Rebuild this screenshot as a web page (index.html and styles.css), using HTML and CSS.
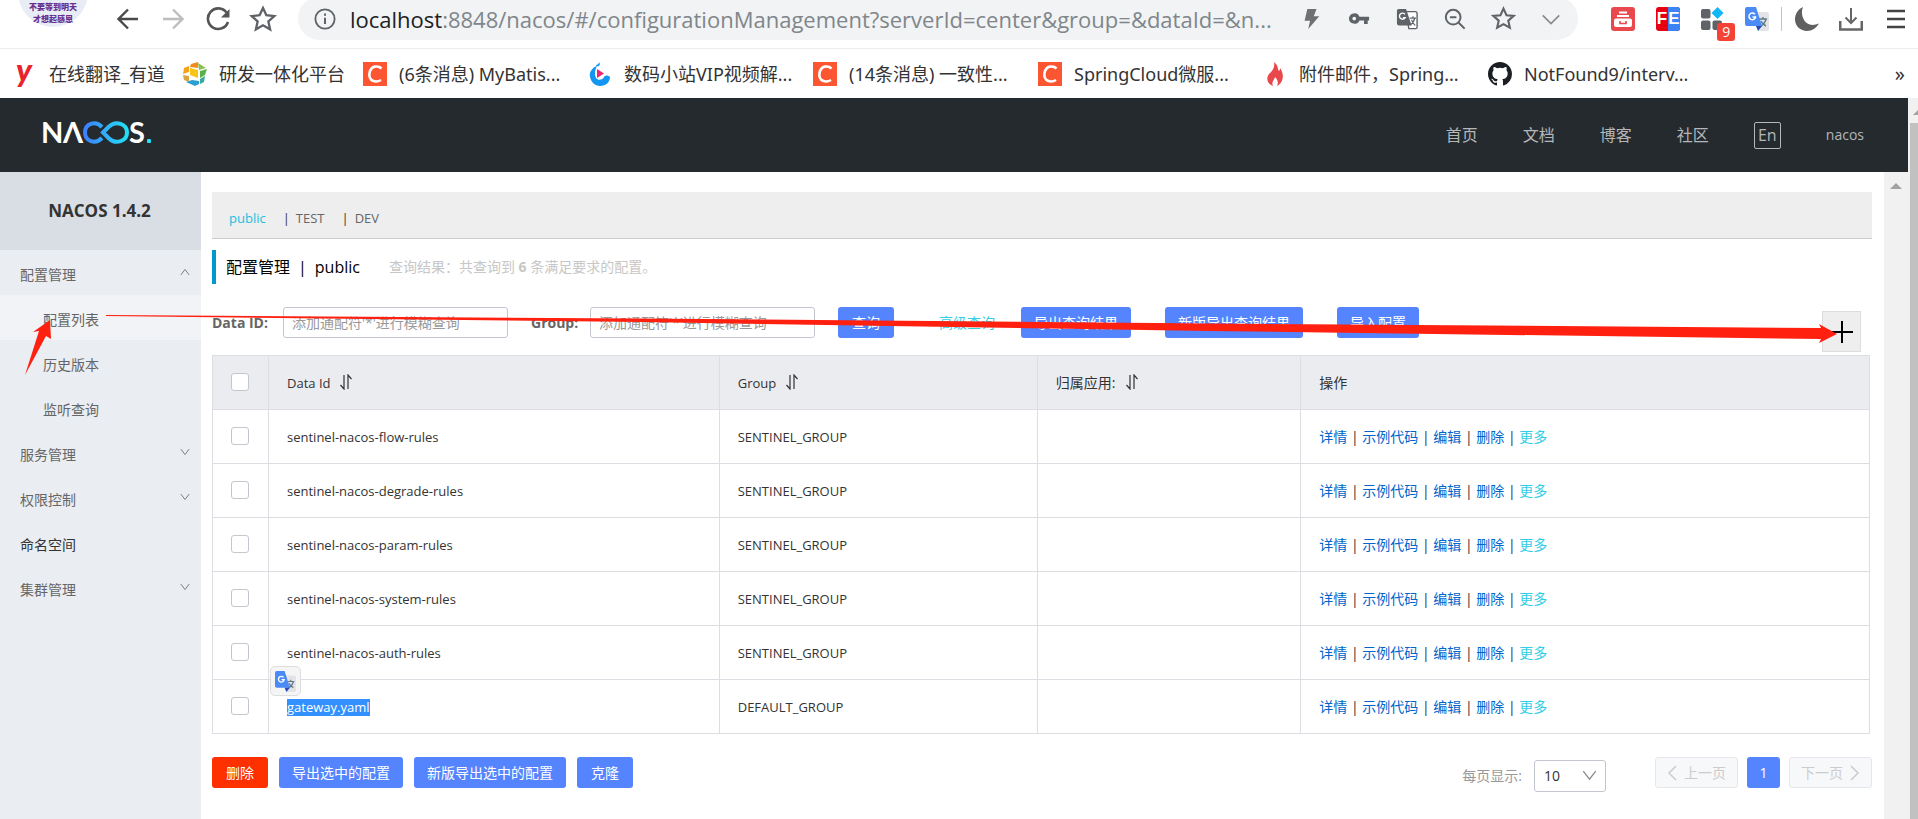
FILE: index.html
```html
<!DOCTYPE html>
<html lang="zh-CN">
<head>
<meta charset="utf-8">
<title>Nacos</title>
<link rel="stylesheet" href="styles.css">
</head>
<body>
<svg class="sprite" aria-hidden="true">
  <symbol id="i-star" viewBox="0 0 24 24"><path d="M12 2.5l2.9 6.3 6.8.7-5.1 4.6 1.5 6.8L12 17.4l-6.1 3.5 1.5-6.8-5.1-4.6 6.8-.7z" fill="none" stroke="currentColor" stroke-width="2"/></symbol>
  <symbol id="i-down" viewBox="0 0 12 12"><path d="M1 2.5L6 9l5-6.500" fill="none" stroke="currentColor" stroke-width="1"/></symbol>
  <symbol id="i-sort" viewBox="0 0 14 16"><path d="M5 1v14L1.500 11M9 15V1l3.500 4" fill="none" stroke="currentColor" stroke-width="1.200"/></symbol>
  <symbol id="i-csdn" viewBox="0 0 24 24"><path fill="#fc5531" d="M0 0h24v24H0z"/><path d="M18.500 6.500C15.500 3.500 8 3 6.500 11c-1.200 8.500 6.500 10 11.500 7" fill="none" stroke="#fff" stroke-width="2.600"/></symbol>
  <symbol id="i-gt" viewBox="0 0 24 24"><path fill="#e3e4e7" d="M9 5h13a2 2 0 012 2v15a2 2 0 01-2 2H13z"/><path d="M14 12h8M18 10v2M21 12c-1 4-3 6-6 7.500M16 14c1 3 3 4 5 5" stroke="#607988" stroke-width="1.400" fill="none"/><path fill="#4b8bf5" d="M2 0h9l6 19H2a2 2 0 01-2-2V2a2 2 0 012-2z"/><path fill="#2a48b8" d="M11 19h6l-4 5z"/><path d="M9.800 7.300A3.300 3.300 0 1010.500 10H7.500" fill="none" stroke="#fff" stroke-width="1.500"/></symbol>
</svg>

<header class="browser">
  <div class="toolbar">
    <div class="avatar"><span>不要等到明天</span><span>才想起感恩</span></div>
    <div class="nav-buttons">
      <button aria-label="后退"><svg viewBox="0 0 24 24"><path d="M22 12H3M12 2.500L2.500 12l9.500 9.500" fill="none" stroke="#4a4a4a" stroke-width="2.400"/></svg></button>
      <button aria-label="前进"><svg viewBox="0 0 24 24"><path d="M2 12h19M12 2.500l9.500 9.500-9.500 9.500" fill="none" stroke="#bdbdbd" stroke-width="2.400"/></svg></button>
      <button aria-label="刷新"><svg viewBox="0 0 24 24"><path d="M20.500 5.500A10.300 10.300 0 1022 15" fill="none" stroke="#555" stroke-width="2.600"/><path d="M23.500 2v8.500H15z" fill="#555"/></svg></button>
      <button aria-label="收藏"><svg class="big"><use href="#i-star"/></svg></button>
    </div>
    <div class="address">
      <svg class="info" viewBox="0 0 24 24"><circle cx="12" cy="12" r="10.500" fill="none" stroke="#5f6368" stroke-width="2"/><path d="M12 10.500v7M12 6v2.500" stroke="#5f6368" stroke-width="2.200"/></svg>
      <div class="url"><b>localhost</b>:8848/nacos/#/configurationManagement?serverId=center&amp;group=&amp;dataId=&amp;n...</div>
      <div class="address-icons">
        <button aria-label="加速"><svg viewBox="0 0 24 24"><path d="M8 1h10l-3 8h6L9 23l2-9H5z" fill="#707070"/></svg></button>
        <button aria-label="密码"><svg viewBox="0 0 24 24"><path d="M1 11.500a6 6 0 0111.500-2H23v4h-1.500v4h-4v-4h-5A6 6 0 011 11.500z" fill="#5f6368"/><circle cx="6.800" cy="11.500" r="2" fill="#f1f3f4"/></svg></button>
        <button aria-label="翻译"><svg viewBox="0 0 24 24"><path d="M11 4h10a2 2 0 012 2v15a1.500 1.500 0 01-1.500 1.500H14z" fill="#fff" stroke="#5f6368" stroke-width="1.500"/><path d="M3 1h8l6 18H3a2 2 0 01-2-2V3a2 2 0 012-2z" fill="#5f6368"/><path d="M9.800 7A3.300 3.300 0 1010 10.500H7.500" fill="none" stroke="#fff" stroke-width="1.500"/><path d="M15 11h7M18.500 9v2M20.500 11c-1 4-2.500 6-5 7.500M17 13c1 3 2 4.500 4 6" stroke="#5f6368" stroke-width="1.400" fill="none"/></svg></button>
        <button aria-label="缩小"><svg viewBox="0 0 24 24"><circle cx="10" cy="10" r="8" fill="none" stroke="#5f6368" stroke-width="2.200"/><path d="M6.500 10h7M16 16l6.500 6.500" stroke="#5f6368" stroke-width="2.200"/></svg></button>
        <button aria-label="书签"><svg class="fav"><use href="#i-star"/></svg></button>
        <button aria-label="展开"><svg viewBox="0 0 24 24"><path d="M3 8l9 9 9-9" fill="none" stroke="#8a8a8a" stroke-width="1.800"/></svg></button>
      </div>
    </div>
    <div class="extensions">
      <button aria-label="收纳"><svg viewBox="0 0 24 24"><rect width="24" height="24" rx="3" fill="#e9484d"/><path d="M8 5.500h8M6 9h12" stroke="#fff" stroke-width="1.800"/><path d="M5 11.500h14a2 2 0 012 2V18a2 2 0 01-2 2H5a2 2 0 01-2-2v-4.500a2 2 0 012-2z" fill="#fff"/><path d="M9 14v2.500h6V14" fill="none" stroke="#e9484d" stroke-width="1.600"/></svg></button>
      <button aria-label="FE"><span class="fe"><i>F</i><i>E</i></span></button>
      <button aria-label="扩展"><svg viewBox="0 0 24 24"><rect x="1" y="2" width="9.500" height="9.500" rx="2" fill="#5f6368"/><rect x="1" y="13.500" width="9.500" height="9.500" rx="2" fill="#5f6368"/><rect x="12.500" y="13.500" width="9.500" height="9.500" rx="2" fill="#5f6368"/><path d="M17.500 0l6 6-6 6-6-6z" fill="#12b7f5"/></svg><span class="count">9</span></button>
      <button aria-label="谷歌翻译"><svg><use href="#i-gt"/></svg></button>
      <span class="divider"></span>
      <button aria-label="夜间"><svg viewBox="0 0 24 24"><path d="M8 0C3 2 0 7 0 12.500 0 19 5.500 24 12 24c5 0 9.500-3 12-7.500-7 3-13 1-15.500-4.500C6.500 8 6.500 3.500 8 0z" fill="#606060"/></svg></button>
      <button aria-label="下载"><svg viewBox="0 0 24 24"><path d="M12 1v15M6.500 10.500L12 16l5.500-5.500" fill="none" stroke="#666" stroke-width="2"/><path d="M1.200 14v8.500h21.600V14" fill="none" stroke="#666" stroke-width="2.600"/></svg></button>
      <button aria-label="菜单"><svg viewBox="0 0 24 24"><path d="M3 4h18M3 12h18M3 20h18" stroke="#444" stroke-width="2.600"/></svg></button>
    </div>
  </div>
  <nav class="bookmarks">
    <a href="#"><span class="youdao">y</span>在线翻译_有道</a>
    <a href="#"><svg viewBox="0 0 24 24"><path d="M1 6l13-6 10 7-3 14-9 3L0 18z" fill="#fff"/><path d="M8 2l7-2v6l-8-1z" fill="#f28a1c"/><path d="M15 1l8 5-7 2z" fill="#8cc152"/><path d="M1 6l5-2v6L0 12z" fill="#f9a01b"/><path d="M7 6l8 2v8l-8-3z" fill="#fbc516"/><path d="M0 13l6 1v6l-5-2z" fill="#d9a441"/><path d="M17 9l7-2-2 6-5 3z" fill="#5bb04a"/><path d="M17 17l5-3-1 6-4 2z" fill="#36a9a0"/><path d="M3 20l6-2 7 1v3l-4 2z" fill="#2c9fd1"/></svg>研发一体化平台</a>
    <a href="#" class="wide"><svg><use href="#i-csdn"/></svg>(6条消息) MyBatis...</a>
    <a href="#" class="wide"><svg viewBox="0 0 24 24"><path d="M9 4C4 6 1 10 2 15c1 5 5 9 10 9 6 0 10-4 10-9-2-2-5-2-6 0-1 3-6 4-8 1-2-4-1-8 1-12z" fill="#1296f0"/><path d="M8 4c0-2 3-1 3-4 2 3 0 5-3 4z" fill="#1296f0"/><path d="M9 7l7 4.500L9 16z" fill="#f0266f"/></svg>数码小站VIP视频解...</a>
    <a href="#" class="wide"><svg><use href="#i-csdn"/></svg>(14条消息) 一致性...</a>
    <a href="#" class="wide"><svg><use href="#i-csdn"/></svg>SpringCloud微服...</a>
    <a href="#" class="wide"><svg viewBox="0 0 24 24"><path d="M11 0c5 4 3 7 5 9 1-1 1-2 1-3 5 7 3 15-3 18 2-4 0-7-2-9-1 4-4 5-2 9-7-3-7-9-3-13 3-3 5-6 4-11z" fill="#e8484a"/></svg>附件邮件，Spring...</a>
    <a href="#" class="wide"><svg viewBox="0 0 16 16"><path fill="#1b1f23" d="M8 0C3.580 0 0 3.580 0 8c0 3.540 2.290 6.530 5.470 7.590.4.070.55-.17.55-.38 0-.19-.01-.82-.01-1.490-2.010.37-2.530-.49-2.690-.94-.09-.23-.48-.94-.82-1.130-.28-.15-.68-.52-.01-.53.63-.01 1.080.58 1.230.82.72 1.210 1.870.87 2.330.66.07-.52.28-.87.51-1.070-1.780-.2-3.640-.89-3.640-3.950 0-.87.31-1.590.82-2.150-.08-.2-.36-1.020.08-2.120 0 0 .67-.21 2.200.82a7.600 7.600 0 014 0c1.530-1.040 2.200-.82 2.200-.82.44 1.100.16 1.920.08 2.120.51.56.82 1.270.82 2.150 0 3.070-1.870 3.750-3.650 3.950.29.25.54.73.54 1.480 0 1.070-.01 1.930-.01 2.200 0 .21.15.46.55.38A8.010 8.010 0 0016 8c0-4.420-3.580-8-8-8z"/></svg>NotFound9/interv...</a>
    <button class="more" aria-label="更多书签">»</button>
  </nav>
</header>

<div class="page">
  <div class="app">
    <header class="topbar">
      <a href="#" class="logo" aria-label="NACOS">
        <svg viewBox="-6 0 120 44" width="120" height="44">
          <defs>
            <linearGradient id="lg" gradientUnits="userSpaceOnUse" x1="40" y1="0" x2="86" y2="0"><stop offset="0" stop-color="#3d7dff"/><stop offset="1" stop-color="#22e3f4"/></linearGradient>
          </defs>
          <text x="-2" y="30">N</text><text x="20" y="30">Λ</text><text x="86" y="30">S</text>
          <path d="M59 14C52 7 42 11 42 19.500S52 32 59 25" fill="none" stroke="url(#lg)" stroke-width="4"/>
          <path d="M60 19.500L66 13.500C73 7 84 11 84 19.500S73 32 66 25.500z" fill="none" stroke="url(#lg)" stroke-width="4"/>
          <rect x="104" y="26" width="4" height="4" rx="1" fill="#22e3f4"/>
        </svg>
      </a>
      <nav class="links">
        <a href="#">首页</a><a href="#">文档</a><a href="#">博客</a><a href="#">社区</a>
        <button class="lang">En</button><a href="#" class="user">nacos</a>
      </nav>
    </header>
    <div class="body">
      <aside class="sidebar">
        <h1>NACOS 1.4.2</h1>
        <nav class="menu">
          <a href="#">配置管理<svg class="up"><use href="#i-down"/></svg></a>
          <a href="#" class="sub current">配置列表</a>
          <a href="#" class="sub">历史版本</a>
          <a href="#" class="sub">监听查询</a>
          <a href="#">服务管理<svg><use href="#i-down"/></svg></a>
          <a href="#">权限控制<svg><use href="#i-down"/></svg></a>
          <a href="#" class="dark">命名空间</a>
          <a href="#">集群管理<svg><use href="#i-down"/></svg></a>
        </nav>
      </aside>
      <main class="content">
        <nav class="spaces"><a href="#" class="on">public</a><span>|</span><a href="#">TEST</a><span>|</span><a href="#">DEV</a></nav>
        <div class="title"><h2>配置管理<span>|</span>public</h2><p>查询结果：共查询到 <b>6</b> 条满足要求的配置。</p></div>
        <form class="search">
          <label for="did" class="l1">Data ID:</label><input id="did" type="text" placeholder="添加通配符'*'进行模糊查询">
          <label for="grp" class="l2">Group:</label><input id="grp" type="text" placeholder="添加通配符'*'进行模糊查询">
          <button type="button" class="btn">查询</button>
          <a href="#" class="adv">高级查询</a>
          <button type="button" class="btn">导出查询结果</button>
          <button type="button" class="btn wide-gap">新版导出查询结果</button>
          <button type="button" class="btn wide-gap">导入配置</button>
          <button type="button" class="add" aria-label="新建"><svg viewBox="0 0 24 24"><path d="M1 12h22M12 1v22" stroke="#000" stroke-width="2"/></svg></button>
        </form>
        <table>
          <colgroup><col class="c1"><col class="c2"><col class="c3"><col class="c4"><col></colgroup>
          <thead><tr><th><input type="checkbox" aria-label="全选"></th><th>Data Id<svg><use href="#i-sort"/></svg></th><th>Group<svg><use href="#i-sort"/></svg></th><th>归属应用:<svg><use href="#i-sort"/></svg></th><th>操作</th></tr></thead>
          <tbody>
            <tr><td><input type="checkbox" aria-label="选择"></td><td>sentinel-nacos-flow-rules</td><td>SENTINEL_GROUP</td><td></td><td><div class="ops"><a href="#">详情</a><i>|</i><a href="#">示例代码</a><i>|</i><a href="#">编辑</a><i>|</i><a href="#">删除</a><i>|</i><a href="#" class="m">更多</a></div></td></tr>
            <tr><td><input type="checkbox" aria-label="选择"></td><td>sentinel-nacos-degrade-rules</td><td>SENTINEL_GROUP</td><td></td><td><div class="ops"><a href="#">详情</a><i>|</i><a href="#">示例代码</a><i>|</i><a href="#">编辑</a><i>|</i><a href="#">删除</a><i>|</i><a href="#" class="m">更多</a></div></td></tr>
            <tr><td><input type="checkbox" aria-label="选择"></td><td>sentinel-nacos-param-rules</td><td>SENTINEL_GROUP</td><td></td><td><div class="ops"><a href="#">详情</a><i>|</i><a href="#">示例代码</a><i>|</i><a href="#">编辑</a><i>|</i><a href="#">删除</a><i>|</i><a href="#" class="m">更多</a></div></td></tr>
            <tr><td><input type="checkbox" aria-label="选择"></td><td>sentinel-nacos-system-rules</td><td>SENTINEL_GROUP</td><td></td><td><div class="ops"><a href="#">详情</a><i>|</i><a href="#">示例代码</a><i>|</i><a href="#">编辑</a><i>|</i><a href="#">删除</a><i>|</i><a href="#" class="m">更多</a></div></td></tr>
            <tr><td><input type="checkbox" aria-label="选择"></td><td>sentinel-nacos-auth-rules</td><td>SENTINEL_GROUP</td><td></td><td><div class="ops"><a href="#">详情</a><i>|</i><a href="#">示例代码</a><i>|</i><a href="#">编辑</a><i>|</i><a href="#">删除</a><i>|</i><a href="#" class="m">更多</a></div></td></tr>
            <tr><td><input type="checkbox" aria-label="选择"></td><td class="picked"><mark>gateway.yaml</mark><button class="bubble" aria-label="翻译"><svg><use href="#i-gt"/></svg></button></td><td>DEFAULT_GROUP</td><td></td><td><div class="ops"><a href="#">详情</a><i>|</i><a href="#">示例代码</a><i>|</i><a href="#">编辑</a><i>|</i><a href="#">删除</a><i>|</i><a href="#" class="m">更多</a></div></td></tr>
          </tbody>
        </table>
        <div class="footer">
          <button class="btn danger">删除</button><button class="btn">导出选中的配置</button><button class="btn">新版导出选中的配置</button><button class="btn">克隆</button>
          <div class="pager">
            <label for="size">每页显示:</label>
            <div class="select"><select id="size"><option>10</option></select><svg><use href="#i-down"/></svg></div>
            <button class="page-btn" disabled><svg viewBox="0 0 10 16"><path d="M9 1L2 8l7 7" fill="none" stroke="currentColor" stroke-width="1.500"/></svg>上一页</button>
            <button class="btn num">1</button>
            <button class="page-btn" disabled>下一页<svg viewBox="0 0 10 16"><path d="M1 1l7 7-7 7" fill="none" stroke="currentColor" stroke-width="1.500"/></svg></button>
          </div>
        </div>
      </main>
      <div class="inner-scroll"><svg viewBox="0 0 12 6"><path d="M0 6l6-6 6 6z" fill="#a3a3a3"/></svg></div>
    </div>
  </div>
  <div class="outer-scroll"><svg viewBox="0 0 12 6"><path d="M0 6l6-6 6 6z" fill="#a3a3a3"/></svg><div class="thumb"></div></div>
</div>
<svg class="marks" viewBox="0 0 1918 819" preserveAspectRatio="none" aria-hidden="true">
  <path d="M106 315L640 318.500 1210 323.500 1821 328 1819 324 1837 334 1819 343 1821 339 1210 331 640 322 106 316z" fill="#ff2010"/>
  <path d="M50 320L33 332l6-1L25 375l21-39 5 3z" fill="#ff2010"/>
</svg>
</body>
</html>
```
FILE: styles.css
```css
* { box-sizing: border-box; }
body { margin: 0; min-height: 100vh; display: flex; flex-direction: column; overflow: hidden; background: #fff; color: #333; font: 13px/20px "Open Sans", "Noto Sans CJK SC", sans-serif; }
a { color: inherit; text-decoration: none; }
button { font: inherit; color: inherit; background: none; border: 0; padding: 0; }
svg { flex: none; }
.sprite { position: absolute; width: 0; height: 0; }

/* browser chrome */
.browser { height: 98px; color: #5f6368; }
.toolbar { display: flex; height: 49px; border-bottom: 1px solid #ececec; }
.toolbar button { position: relative; flex: 0 1 45px; height: 38px; display: flex; align-items: center; justify-content: center; }
.toolbar svg { width: 24px; height: 24px; }
.avatar { width: 70px; height: 70px; margin: -43px 0 0 18px; border-radius: 50%; background: #e8edf5; display: flex; flex-direction: column; align-items: center; justify-content: flex-end; padding-bottom: 2px; font-weight: 900; font-size: 8px; line-height: 12px; color: #6a2f8e; white-space: nowrap; }
.nav-buttons { display: flex; width: 193px; margin-left: 17px; }
.nav-buttons button { flex: none; width: 45px; }
.toolbar svg.big { width: 28px; height: 28px; }
.address { flex: 1; display: flex; align-items: center; height: 43px; margin-top: -3px; padding: 0 3px 0 16px; border-radius: 22px; background: #f1f3f4; }
.toolbar svg.info { width: 22px; height: 22px; }
.url { flex: 1; margin-left: 14px; font-size: 22px; line-height: 30px; white-space: nowrap; color: #80868b; }
.url b { font-weight: 400; color: #202124; }
.address-icons { display: flex; width: 288px; }
.address-icons button { flex: 1 1 48px; }
.address-icons svg { width: 22px; height: 22px; }
.address-icons svg.fav { width: 25px; height: 25px; }
.extensions { display: flex; align-items: flex-start; width: 340px; padding-left: 23px; }
.divider { width: 1px; height: 24px; margin: 7px 2px; background: #c4c4c4; }
.fe { display: flex; width: 24px; height: 24px; border-radius: 3px; overflow: hidden; background: #e60012; }
.fe i { flex: 1; font: 700 17px/24px "Liberation Sans", sans-serif; color: #fff; text-align: center; }
.fe i + i { background: #3c83f6; }
.count { position: absolute; left: 27px; top: 23px; width: 18px; height: 18px; border-radius: 3px; background: #f44336; color: #fff; font-size: 14px; line-height: 18px; }
.bookmarks { display: flex; align-items: center; height: 49px; padding: 0 13px 0 16px; gap: 18px; font-family: "Noto Sans", "Noto Sans CJK SC", sans-serif; font-size: 18px; line-height: 24px; color: #333; }
.bookmarks a { display: flex; align-items: center; gap: 12px; white-space: nowrap; }
.bookmarks .wide { width: 207px; }
.bookmarks svg { width: 24px; height: 24px; }
.youdao { width: 21px; height: 32px; font: italic 900 32px/24px Lato, sans-serif; color: #e8232c; }
.more { margin-left: auto; font-size: 20px; }

/* page */
.page { flex: 1; display: flex; }
.app { flex: 1; display: flex; flex-direction: column; min-width: 0; }
.outer-scroll { width: 10px; padding-left: 2px; background: #f1f1f1; display: flex; flex-direction: column; overflow: hidden; }
.outer-scroll svg { width: 12px; height: 6px; margin: 11px 0 8px 3px; }
.thumb { flex: 1; background: #c1c1c1; }
.topbar { height: 74px; display: flex; align-items: center; justify-content: space-between; padding: 0 44px 0 37px; background: #252a2f; color: #b4b6b8; }
.logo { display: flex; }
.logo text { font: 700 29px Lato, sans-serif; fill: #fff; }
.links { display: flex; align-items: center; gap: 45px; font-size: 16px; }
.lang { width: 27px; height: 27px; border: 1px solid #b4b6b8; border-radius: 2px; font-size: 16px; line-height: 22px; }
.user { font-size: 14px; }
.body { flex: 1; display: flex; }

.sidebar { width: 201px; background: #eaedf2; }
.sidebar h1 { margin: 0; height: 78px; font-size: 17px; line-height: 78px; text-align: center; background: #d9dde4; padding-right: 2px; }
.menu { font-size: 14px; color: #666; }
.menu a { display: flex; align-items: center; justify-content: space-between; height: 45px; padding: 4px 11px 0 20px; }
.menu svg { width: 10px; height: 10px; margin-bottom: 6px; }
.menu .up { transform: rotate(180deg); }
.menu .sub { padding-left: 43px; }
.menu .current { background: #f2f3f7; }
.menu .dark { color: #333; }

.content { flex: 1; min-width: 0; padding: 20px 12px 0 11px; }
.spaces { display: flex; height: 47px; padding: 5px 17px 0; align-items: center; background: #eee; border-bottom: 1px solid #ccc; color: #666; }
.spaces span { margin: 0 6px 0 17px; color: #333; }
.spaces .on { color: #1cc0df; }
.title { display: flex; align-items: center; height: 34px; margin-top: 11px; border-left: 4px solid #09c; padding-left: 10px; }
.title h2 { margin: 0; font-size: 16px; font-weight: 400; color: #000; }
.title h2 span { margin: 0 8px; }
.title p { margin: 0 0 0 29px; font-size: 14px; color: #c7c7c7; }
.search { display: flex; align-items: flex-start; margin-top: 23px; height: 48px; padding-right: 11px; }
.search label { font-size: 14px; font-weight: 700; line-height: 32px; color: #666; white-space: nowrap; }
.l1 { width: 71px; }
.l2 { width: 59px; margin-left: 23px; }
.search input { width: 225px; height: 31px; border: 1px solid #c4c6cf; border-radius: 3px; padding: 0 8px; font: inherit; font-size: 14px; }
.search input::placeholder { color: #999; }
.btn { height: 31px; min-width: 56px; padding: 0 13px; border-radius: 3px; background: #5584ff; color: #fff; font-size: 14px; white-space: nowrap; }
.search input + .btn { margin-left: 23px; }
.adv { margin: 0 26px 0 45px; font-size: 14px; line-height: 32px; color: #33cde5; }
.search .wide-gap { margin-left: 34px; }
.add { margin: 4px 0 0 auto; width: 39px; height: 41px; border: 1px solid #ddd; background: #eee; display: flex; align-items: center; justify-content: center; }
.add svg { width: 24px; height: 24px; }

table { width: calc(100% - 2px); table-layout: fixed; border-collapse: collapse; }
.c1 { width: 56px; }
.c2 { width: 27.2%; }
.c3 { width: 19.2%; }
.c4 { width: 15.9%; }
th, td { height: 54px; padding: 0 18px; border: 1px solid #dcdee3; text-align: left; font-weight: 400; }
th { background: #ebecf0; }
th:nth-child(n+4) { font-size: 14px; }
th svg { width: 14px; height: 16px; margin-left: 9px; vertical-align: -2px; }
input[type="checkbox"] { appearance: none; display: block; margin: 0 0 2px; width: 18px; height: 18px; border: 1px solid #c4c6cf; border-radius: 3px; background: #fff; }
.ops { display: flex; font-size: 14px; color: #06c; }
.ops i { width: 15px; text-align: center; font-style: normal; color: #333; }
.ops .m { color: #33cde5; }
.picked { position: relative; }
mark { background: #3390ff; color: #fff; display: inline-block; line-height: 17px; }
.bubble { position: absolute; left: 1px; top: -14px; width: 31px; height: 30px; border: 1px solid #ddd; border-radius: 5px; background: #f5f5f5; display: flex; align-items: center; justify-content: center; }
.bubble svg { width: 21px; height: 21px; }

.footer { display: flex; align-items: flex-start; gap: 11px; margin-top: 23px; }
.danger { background: #ff3000; }
.pager { display: flex; align-items: flex-start; margin-left: auto; }
.pager label { font-size: 14px; line-height: 38px; color: #999; margin-right: 12px; }
.select { position: relative; margin: 3px 49px 0 0; }
.select select { appearance: none; width: 72px; height: 32px; padding: 0 9px; border: 1px solid #c4c6cf; border-radius: 3px; background: #fff; color: #333; font: inherit; font-size: 14px; }
.select svg { position: absolute; right: 9px; top: 8px; width: 15px; height: 15px; color: #888; pointer-events: none; }
.page-btn { display: flex; align-items: center; justify-content: center; gap: 7px; width: 83px; height: 31px; border: 1px solid #e6e7eb; border-radius: 3px; background: #f7f8fa; color: #ccc; font-size: 14px; }
.page-btn svg { width: 10px; height: 16px; }
.num { min-width: 33px; margin: 0 9px; padding: 0; }
.inner-scroll { width: 24px; background: #f1f1f1; display: flex; justify-content: center; padding-top: 11px; }
.inner-scroll svg { width: 12px; height: 6px; }
.marks { position: absolute; left: 0; top: 0; width: 100%; height: 819px; pointer-events: none; }
```
